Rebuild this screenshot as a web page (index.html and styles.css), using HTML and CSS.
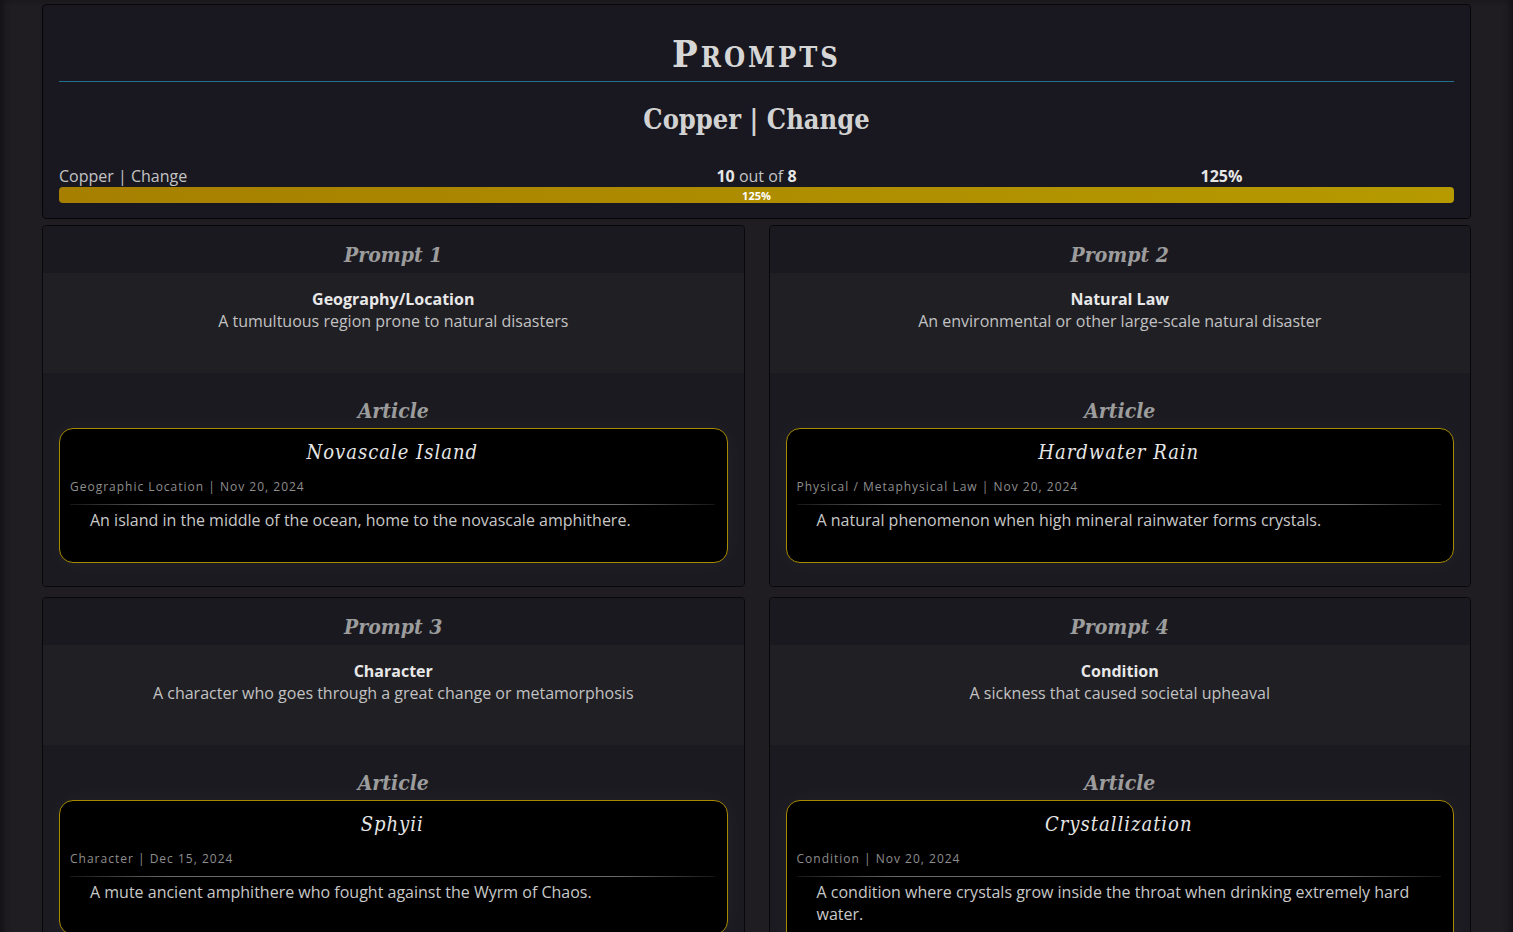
FILE: index.html
```html
<!DOCTYPE html>
<html lang="en">
<head>
<meta charset="utf-8">
<title>Prompts</title>
<link rel="stylesheet" href="styles.css">
</head>
<body>
<div class="page">
  <section class="panel">
    <h1 class="panel-title">Prompts</h1>
    <h2 class="panel-subtitle">Copper | Change</h2>
    <div class="progress-labels">
      <span class="pl-left">Copper | Change</span>
      <span class="pl-center"><b>10</b> out of <b>8</b></span>
      <span class="pl-right"><b>125%</b></span>
    </div>
    <div class="progress">
      <div class="progress-fill" style="width:100%">125%</div>
    </div>
  </section>

  <div class="grid">
    <article class="card">
      <header class="card-head">Prompt 1</header>
      <div class="prompt">
        <div class="prompt-cat">Geography/Location</div>
        <div class="prompt-desc">A tumultuous region prone to natural disasters</div>
      </div>
      <div class="article-sec">
        <div class="article-label">Article</div>
        <div class="article-card">
          <div class="article-title">Novascale Island</div>
          <div class="article-meta">Geographic Location | Nov 20, 2024</div>
          <div class="article-rule"></div>
          <div class="article-desc">An island in the middle of the ocean, home to the novascale amphithere.</div>
        </div>
      </div>
    </article>

    <article class="card">
      <header class="card-head">Prompt 2</header>
      <div class="prompt">
        <div class="prompt-cat">Natural Law</div>
        <div class="prompt-desc">An environmental or other large-scale natural disaster</div>
      </div>
      <div class="article-sec">
        <div class="article-label">Article</div>
        <div class="article-card">
          <div class="article-title">Hardwater Rain</div>
          <div class="article-meta">Physical / Metaphysical Law | Nov 20, 2024</div>
          <div class="article-rule"></div>
          <div class="article-desc">A natural phenomenon when high mineral rainwater forms crystals.</div>
        </div>
      </div>
    </article>

    <article class="card">
      <header class="card-head">Prompt 3</header>
      <div class="prompt">
        <div class="prompt-cat">Character</div>
        <div class="prompt-desc">A character who goes through a great change or metamorphosis</div>
      </div>
      <div class="article-sec">
        <div class="article-label">Article</div>
        <div class="article-card">
          <div class="article-title">Sphyii</div>
          <div class="article-meta">Character | Dec 15, 2024</div>
          <div class="article-rule"></div>
          <div class="article-desc">A mute ancient amphithere who fought against the Wyrm of Chaos.</div>
        </div>
      </div>
    </article>

    <article class="card">
      <header class="card-head">Prompt 4</header>
      <div class="prompt">
        <div class="prompt-cat">Condition</div>
        <div class="prompt-desc">A sickness that caused societal upheaval</div>
      </div>
      <div class="article-sec">
        <div class="article-label">Article</div>
        <div class="article-card">
          <div class="article-title">Crystallization</div>
          <div class="article-meta">Condition | Nov 20, 2024</div>
          <div class="article-rule"></div>
          <div class="article-desc">A condition where crystals grow inside the throat when drinking extremely hard water.</div>
        </div>
      </div>
    </article>
  </div>
</div>
</body>
</html>
```

FILE: styles.css
```css
html, body {
  margin: 0;
  padding: 0;
  background: #1f1d22;
}

body {
  font-family: "Open Sans", "Liberation Sans", sans-serif;
  color: #c6c6c6;
  font-size: 16px;
  line-height: 22px;
  min-height: 932px;
  box-shadow: inset 6px 0 6px -3px #121115, inset -6px 0 6px -3px #121115;
}

.page {
  padding: 4px 42px 0;
}

.panel {
  background: #191820;
  border: 1px solid #060608;
  border-radius: 4px;
  padding: 0 16px 15px;
}

.panel-title {
  margin: 0;
  padding: 29px 0 7px;
  font-family: "DejaVu Serif", "Liberation Serif", serif;
  font-stretch: condensed;
  font-variant: small-caps;
  font-weight: bold;
  font-size: 38px;
  line-height: 40px;
  letter-spacing: 3px;
  text-align: center;
  color: #d6d6d6;
  border-bottom: 1px solid #23708c;
}

.panel-subtitle {
  margin: 20px 0 0;
  font-family: "DejaVu Serif", "Liberation Serif", serif;
  font-stretch: condensed;
  font-weight: bold;
  font-size: 27px;
  line-height: 36px;
  text-align: center;
  color: #d2d2d2;
}

.progress-labels {
  margin-top: 27px;
  display: grid;
  grid-template-columns: 1fr 1fr 1fr;
  color: #c4c4c4;
}

.progress-labels b {
  color: #e6e6e6;
  font-weight: 700;
}

.pl-center,
.pl-right {
  text-align: center;
}

.progress {
  height: 16px;
  border-radius: 4px;
  background: #2a2930;
  overflow: hidden;
}

.progress-fill {
  height: 100%;
  background: linear-gradient(90deg, #a67f00, #b69a00);
  color: #ffffff;
  font-size: 11px;
  font-weight: 700;
  line-height: 17px;
  text-align: center;
}

.grid {
  margin-top: 6px;
  display: grid;
  grid-template-columns: 1fr 1fr;
  column-gap: 24px;
  row-gap: 10px;
}

.card {
  border: 1px solid #08080a;
  border-radius: 4px;
  overflow: hidden;
  display: flex;
  flex-direction: column;
}

.card-head,
.article-label {
  font-family: "DejaVu Serif", "Liberation Serif", serif;
  font-stretch: condensed;
  font-style: italic;
  font-weight: bold;
  font-size: 21px;
  line-height: 28px;
  text-align: center;
  color: #9c9c9c;
}

.card-head {
  background: #1a1920;
  padding: 15px 0 4px;
}

.prompt {
  background: #201f24;
  padding: 15px 16px 41px;
  text-align: center;
}

.prompt-cat {
  font-weight: 700;
  color: #e8e8e8;
}

.prompt-desc {
  color: #c2c2c2;
}

.article-sec {
  flex: 1;
  background: #1b1a20;
  padding: 24px 16px 23px;
}

.article-label {
  margin-bottom: 3px;
}

.article-card {
  background: #000000;
  border: 1px solid #a88a00;
  border-radius: 14px;
  padding: 10px 12px 31px 10px;
  box-shadow: 0 0 24px rgba(255, 255, 255, 0.04);
}

.article-title {
  font-family: "DejaVu Serif", "Liberation Serif", serif;
  font-stretch: condensed;
  font-style: italic;
  font-size: 20px;
  line-height: 26px;
  letter-spacing: 1px;
  text-align: center;
  color: #e6e6e6;
}

.article-meta {
  margin-top: 13px;
  font-size: 12px;
  line-height: 17px;
  letter-spacing: 1px;
  color: #8e8e8e;
}

.article-rule {
  margin-top: 9px;
  height: 1px;
  background: linear-gradient(90deg, rgba(110, 110, 110, 0.2), #6a6a6a 15%, #6a6a6a 85%, rgba(110, 110, 110, 0.2));
}

.article-desc {
  margin-top: 4px;
  padding: 0 18px 0 20px;
  color: #c8c8c8;
}
```
